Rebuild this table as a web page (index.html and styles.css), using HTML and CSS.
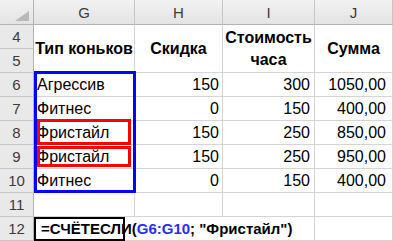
FILE: index.html
```html
<!DOCTYPE html>
<html lang="ru">
<head>
  <meta charset="UTF-8">
  <title>СЧЁТЕСЛИ</title>
  <link rel="stylesheet" href="styles.css">
</head>
<body>
<div class="sheet">
  <div class="grid">
    <div class="cell corner">
      <svg width="33" height="24" viewBox="0 0 33 24"><polygon points="29,11 29,21 15,21" fill="#b9b9b9"/></svg>
    </div>
    <div class="cell col-head">G</div>
    <div class="cell col-head">H</div>
    <div class="cell col-head">I</div>
    <div class="cell col-head">J</div>

    <div class="cell row-head">4</div>
    <div class="cell title">Тип коньков</div>
    <div class="cell title">Скидка</div>
    <div class="cell title wrap">Стоимость<br>часа</div>
    <div class="cell title">Сумма</div>
    <div class="cell row-head">5</div>

    <div class="cell row-head">6</div>
    <div class="cell">Агрессив</div>
    <div class="cell num">150</div>
    <div class="cell num col-i">300</div>
    <div class="cell num col-j">1050,00</div>

    <div class="cell row-head">7</div>
    <div class="cell">Фитнес</div>
    <div class="cell num">0</div>
    <div class="cell num col-i">150</div>
    <div class="cell num col-j">400,00</div>

    <div class="cell row-head">8</div>
    <div class="cell">Фристайл</div>
    <div class="cell num">150</div>
    <div class="cell num col-i">250</div>
    <div class="cell num col-j">850,00</div>

    <div class="cell row-head">9</div>
    <div class="cell">Фристайл</div>
    <div class="cell num">150</div>
    <div class="cell num col-i">250</div>
    <div class="cell num col-j">950,00</div>

    <div class="cell row-head">10</div>
    <div class="cell">Фитнес</div>
    <div class="cell num">0</div>
    <div class="cell num col-i">150</div>
    <div class="cell num col-j">400,00</div>

    <div class="cell row-head">11</div>
    <div class="cell"></div>
    <div class="cell"></div>
    <div class="cell"></div>
    <div class="cell"></div>

    <div class="cell row-head">12</div>
    <div class="cell formula">=СЧЁТЕСЛИ(<span class="ref">G6:G10</span>; "Фристайл")</div>
    <div class="cell"></div>
  </div>

  <!-- рамки выделения поверх ячеек -->
  <div class="frame range"></div>
  <div class="frame hit hit-1"></div>
  <div class="frame hit hit-2"></div>
  <div class="frame active"></div>
</div>
</body>
</html>
```

FILE: styles.css
```css
* {
  margin: 0;
  padding: 0;
  box-sizing: border-box;
}

body {
  font-family: "Liberation Sans", Arial, sans-serif;
  font-size: 16px;
  color: #000;
  background-color: #fff;
}

.sheet {
  position: relative;
  width: 393px;
  height: 241px;
  overflow: hidden;
}

.grid {
  display: grid;
  grid-template-columns: 34px 101px 88px 92px 78px;
  grid-template-rows: 25px repeat(9, 24px);
}

.cell {
  display: flex;
  align-items: flex-end;
  padding: 0 3px 3px;
  line-height: 16px;
  white-space: nowrap;
  border-right: 1px solid #d4d4d4;
  border-bottom: 1px solid #d4d4d4;
}

.corner,
.col-head,
.row-head {
  background: linear-gradient(#f2f2f2, #e3e3e3);
  border-color: #c6c6c6;
  color: #3c3c3c;
  font-size: 15px;
  justify-content: center;
}

.corner {
  padding: 0;
  align-items: stretch;
  border-right-color: #b3b3b3;
  border-bottom-color: #b3b3b3;
}

.col-head {
  border-bottom-color: #b3b3b3;
}

.row-head {
  background: #e9e9e9;
  border-right-color: #b3b3b3;
}

.title {
  grid-row: span 2;
  align-items: center;
  justify-content: center;
  text-align: center;
  font-weight: bold;
  padding: 0;
}

.wrap {
  line-height: 22px;
}

.num {
  justify-content: flex-end;
}

.col-i {
  padding-right: 4px;
}

.col-j {
  padding-right: 6px;
}

.formula {
  grid-column: span 3;
  font-size: 15px;
  font-weight: bold;
  padding-left: 7px;
}

.ref {
  color: #2b2bff;
}

.frame {
  position: absolute;
  pointer-events: none;
}

.range {
  left: 34px;
  top: 71px;
  width: 102px;
  height: 122px;
  border: 3px solid #0000ff;
}

.hit {
  left: 37px;
  width: 94px;
  border: 3px solid #ff0000;
}

.hit-1 {
  top: 119px;
  height: 26px;
}

.hit-2 {
  top: 146px;
  height: 21px;
}

.active {
  left: 34px;
  top: 217px;
  width: 91px;
  height: 24px;
  border: 2px solid #000;
}
```
